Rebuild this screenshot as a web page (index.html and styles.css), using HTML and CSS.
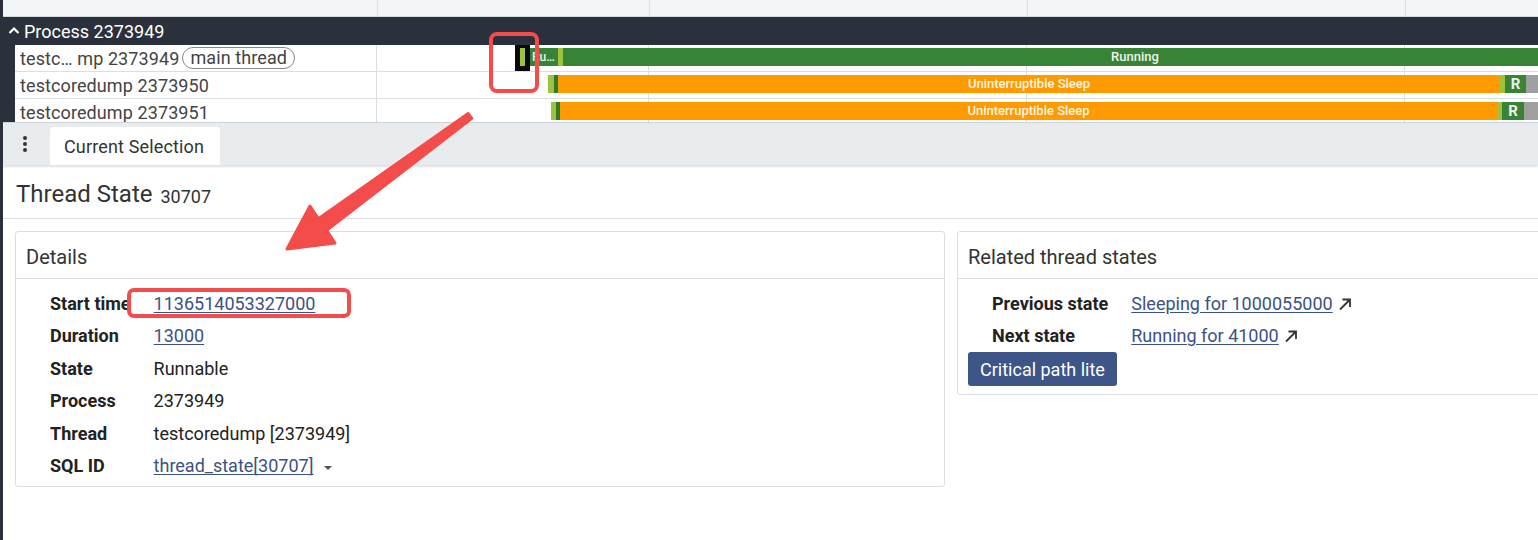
FILE: index.html
```html
<!DOCTYPE html>
<html>
<head>
<meta charset="utf-8">
<link rel="stylesheet" href="styles.css">
</head>
<body>
<div class="rail"></div>
<div class="main">
  <div class="timeline">
    <div class="ruler">
      <div class="ruler-label"></div>
      <div class="ruler-track grid"></div>
    </div>
    <div class="proc-head">
      <svg class="chev" width="14" height="10" viewBox="0 0 14 10"><path d="M2.5 8 L7 3.5 L11.5 8" fill="none" stroke="#fff" stroke-width="2.2"/></svg>
      <span>Process 2373949</span>
    </div>
    <div class="proc-body">
      <div class="trow">
        <div class="tlabel">testc… mp 2373949<span class="pill">main thread</span></div>
        <div class="track grid">
          <div class="sel" style="left:138px;width:15px"><div class="sel-in"></div></div>
          <div class="slice run small" style="left:153px;width:28px">Ru…</div>
          <div class="slice lime" style="left:181px;width:5px"></div>
          <div class="slice run" style="left:186px;width:1144px">Running</div>
        </div>
      </div>
      <div class="trow">
        <div class="tlabel">testcoredump 2373950</div>
        <div class="track grid">
          <div class="slice lime" style="left:171px;width:6px"></div>
          <div class="slice dk" style="left:177px;width:4px"></div>
          <div class="slice sleep" style="left:181px;width:942px">Uninterruptible Sleep</div>
          <div class="slice lime" style="left:1123px;width:5px"></div>
          <div class="slice run big" style="left:1128px;width:21px">R</div>
          <div class="slice gray" style="left:1149px;width:40px"></div>
        </div>
      </div>
      <div class="trow">
        <div class="tlabel">testcoredump 2373951</div>
        <div class="track grid">
          <div class="slice lime" style="left:174px;width:5px"></div>
          <div class="slice dk" style="left:179px;width:4px"></div>
          <div class="slice sleep" style="left:183px;width:937px">Uninterruptible Sleep</div>
          <div class="slice lime" style="left:1120px;width:5px"></div>
          <div class="slice run big" style="left:1125px;width:22px">R</div>
          <div class="slice gray" style="left:1147px;width:40px"></div>
        </div>
      </div>
    </div>
  </div>

  <div class="tabbar">
    <div class="menu">
      <svg width="6" height="18" viewBox="0 0 6 18"><circle cx="3" cy="3" r="2" fill="#333"/><circle cx="3" cy="9" r="2" fill="#333"/><circle cx="3" cy="15" r="2" fill="#333"/></svg>
    </div>
    <div class="tab">Current Selection</div>
  </div>

  <div class="details">
    <div class="title">Thread State <span class="title-id">30707</span></div>
    <div class="cards">
      <div class="card">
        <div class="card-head">Details</div>
        <div class="card-body">
          <table class="kv">
            <tr><td class="k">Start time</td><td><a class="lnk">1136514053327000</a></td></tr>
            <tr><td class="k">Duration</td><td><a class="lnk">13000</a></td></tr>
            <tr><td class="k">State</td><td>Runnable</td></tr>
            <tr><td class="k">Process</td><td>2373949</td></tr>
            <tr><td class="k">Thread</td><td>testcoredump [2373949]</td></tr>
            <tr><td class="k">SQL ID</td><td><a class="lnk">thread_state[30707]</a><span class="caret"></span></td></tr>
          </table>
        </div>
      </div>
      <div class="card">
        <div class="card-head">Related thread states</div>
        <div class="card-body">
          <table class="kv">
            <tr><td class="k">Previous state</td><td><a class="lnk">Sleeping for 1000055000</a><svg class="ext" width="14" height="14" viewBox="0 0 14 14"><path d="M2 12.5 L12 2.5 M4.5 2.5 H12 V10" fill="none" stroke="#333" stroke-width="1.8"/></svg></td></tr>
            <tr><td class="k">Next state</td><td><a class="lnk">Running for 41000</a><svg class="ext" width="14" height="14" viewBox="0 0 14 14"><path d="M2 12.5 L12 2.5 M4.5 2.5 H12 V10" fill="none" stroke="#333" stroke-width="1.8"/></svg></td></tr>
          </table>
          <button class="btn">Critical path lite</button>
        </div>
      </div>
    </div>
  </div>
</div>

<svg class="annot" width="1538" height="540" viewBox="0 0 1538 540">
  <rect x="491" y="34" width="46" height="57" rx="6" fill="none" stroke="#f44b4b" stroke-width="4"/>
  <rect x="129" y="290" width="220" height="26" rx="5" fill="none" stroke="#f44b4b" stroke-width="4"/>
  <polygon points="468.2,113.6 318.4,218.8 310,206 287,249 335,243 326.6,230.2 471.8,118.4" fill="#f44b4b" stroke="#f44b4b" stroke-width="3" stroke-linejoin="round"/>
</svg>
</body>
</html>
```

FILE: styles.css
```css
html, body {
  margin: 0;
  padding: 0;
}
body {
  position: relative;
  display: flex;
  width: 1538px;
  height: 540px;
  overflow: hidden;
  background: #fff;
  color: #333;
  font-family: Roboto, "Noto Sans", sans-serif;
  font-size: 18px;
}
.rail {
  flex: none;
  width: 3px;
  background: #2a313c;
}
.main {
  flex: 1;
  min-width: 0;
  overflow: hidden;
}

/* timeline */
.grid {
  background-image:
    linear-gradient(#dcdfe2, #dcdfe2),
    linear-gradient(#dcdfe2, #dcdfe2),
    linear-gradient(#dcdfe2, #dcdfe2);
  background-size: 1px 100%;
  background-repeat: no-repeat;
  background-position: 271px 0, 649px 0, 1027px 0;
}
.ruler {
  display: flex;
  height: 17px;
  box-sizing: border-box;
  border-bottom: 1px solid #d6dadd;
  background-color: #f3f6f8;
}
.ruler-label {
  flex: none;
  width: 374px;
  border-right: 1px solid #dcdfe2;
}
.ruler-track {
  flex: 1;
}
.proc-head {
  display: flex;
  align-items: center;
  height: 28px;
  background: #2a313c;
  color: #fff;
  font-size: 18px;
  padding-left: 4px;
  gap: 3px;
}
.chev {
  margin-top: -2px;
}
.proc-body {
  background: #2a313c;
  padding-left: 12px;
  height: 77px;
  overflow: hidden;
}
.trow {
  display: flex;
  height: 27px;
  box-sizing: border-box;
  border-bottom: 1px solid #dcdfe2;
  background: #fff;
}
.tlabel {
  flex: none;
  width: 362px;
  box-sizing: border-box;
  border-right: 1px solid #dcdfe2;
  padding-left: 5px;
  display: flex;
  align-items: center;
  white-space: nowrap;
  color: #444;
  font-size: 18px;
  letter-spacing: 0.1px;
}
.pill {
  margin-left: 3px;
  border: 1px solid #888;
  border-radius: 11px;
  padding: 0 7px;
  line-height: 20px;
}
.track {
  flex: 1;
  position: relative;
  overflow: hidden;
}
.slice {
  position: absolute;
  top: 3px;
  height: 18px;
  color: #eef3ea;
  font-size: 13px;
  font-weight: 500;
  line-height: 18px;
  text-align: center;
  overflow: hidden;
  white-space: nowrap;
}
.slice.small {
  text-align: left;
  padding-left: 2px;
  box-sizing: border-box;
  font-size: 12px;
}
.slice.big {
  font-size: 15px;
  font-weight: 700;
}
.run { background: #388436; }
.lime { background: #9cc23e; }
.dk { background: #2c7a2c; }
.sleep { background: #ff9a00; color: #fff6e6; }
.gray { background: #a0a0a0; }
.sel {
  position: absolute;
  top: -1px;
  height: 27px;
  background: #0a0a0a;
}
.sel-in {
  position: absolute;
  left: 5px;
  top: 4px;
  width: 5px;
  height: 18px;
  background: #9cc23e;
}

/* tabs */
.tabbar {
  display: flex;
  align-items: flex-end;
  height: 43px;
  box-sizing: border-box;
  background: #e9ecee;
  border-top: 1px solid #cfd3d6;
  box-shadow: 0 2px 2px rgba(0,0,0,0.12);
  position: relative;
}
.menu {
  width: 47px;
  height: 100%;
  display: flex;
  align-items: center;
  justify-content: center;
  box-sizing: border-box;
  padding-right: 4px;
}
.tab {
  height: 38px;
  padding: 0 14px 0 14px;
  width: 170px;
  box-sizing: border-box;
  background: #fff;
  border-radius: 4px 4px 0 0;
  display: flex;
  align-items: center;
  font-size: 18px;
  color: #333;
  letter-spacing: 0.15px;
}

/* details */
.title {
  height: 54px;
  box-sizing: border-box;
  border-bottom: 1px solid #dcdfe2;
  padding-left: 13px;
  display: flex;
  align-items: center;
  font-size: 24px;
  color: #333;
  padding-top: 5px;
}
.title-id {
  font-size: 18px;
  margin-left: 8px;
  margin-top: 4px;
}
.cards {
  display: grid;
  grid-template-columns: 930px 930px;
  gap: 12px;
  padding: 12px 0 0 12px;
  align-items: start;
}
.card {
  border: 1px solid #dcdfe2;
  border-radius: 3px;
}
.card-head {
  height: 47px;
  border-bottom: 1px solid #dcdfe2;
  padding-left: 10px;
  display: flex;
  align-items: center;
  font-size: 20px;
  color: #333;
  padding-top: 3px;
  box-sizing: border-box;
}
.card-body {
  padding: 8px 10px 4px;
}
.kv {
  border-collapse: collapse;
}
.kv td {
  height: 32.5px;
  padding: 0 16px 0 0;
  white-space: nowrap;
  font-size: 18px;
  color: #222;
}
.kv td.k {
  font-weight: 700;
  padding-left: 24px;
  padding-right: 23px;
  color: #222;
}
.lnk {
  color: #3b5283;
  text-decoration: underline;
  text-underline-offset: 2px;
}
.caret {
  display: inline-block;
  margin-left: 11px;
  vertical-align: middle;
  border-left: 4px solid transparent;
  border-right: 4px solid transparent;
  border-top: 4px solid #555;
}
.ext {
  margin-left: 5px;
  vertical-align: -1px;
}
.btn {
  display: block;
  margin-top: 0;
  margin-bottom: 4px;
  height: 34px;
  padding: 0 12px;
  border: none;
  border-radius: 3px;
  background: #3d5587;
  color: #fff;
  font-family: Roboto, "Noto Sans", sans-serif;
  font-size: 18px;
}

.annot {
  position: absolute;
  left: 0;
  top: 0;
  pointer-events: none;
}
```
